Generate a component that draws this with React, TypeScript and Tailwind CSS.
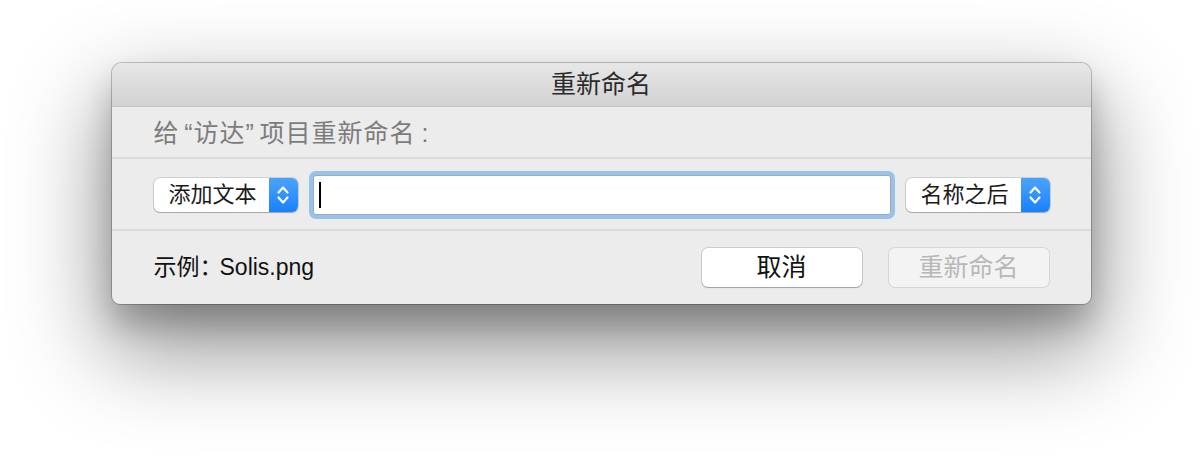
import React from "react";

const font = { fontFamily: '"Liberation Sans", "Noto Sans CJK SC", sans-serif' };

function Chevrons() {
  return (
    <svg width="14" height="22" viewBox="0 0 14 22" fill="none">
      <path d="M2.5 8.5 L7 3.5 L11.5 8.5" stroke="white" strokeWidth="2.2" strokeLinecap="round" strokeLinejoin="round" />
      <path d="M2.5 13.5 L7 18.5 L11.5 13.5" stroke="white" strokeWidth="2.2" strokeLinecap="round" strokeLinejoin="round" />
    </svg>
  );
}

function Popup({ label }: { label: string }) {
  return (
    <div className="flex h-[34px] w-[144px] items-stretch rounded-[6px] bg-white shadow-[0_0_0_1px_rgba(0,0,0,0.12),0_1px_1px_rgba(0,0,0,0.2)]">
      <div className="flex flex-1 items-center pl-[15px] text-[22px] text-[#1a1a1a]">{label}</div>
      <div className="flex w-[29px] items-center justify-center rounded-r-[6px] bg-gradient-to-b from-[#4aa3fd] to-[#1681fb]">
        <Chevrons />
      </div>
    </div>
  );
}

export default function App() {
  return (
    <div className="h-[464px] w-[1202px] bg-white pt-[63px]" style={font}>
      <div className="mx-auto flex h-[241px] w-[979px] flex-col overflow-hidden rounded-[10px] rounded-b-[8px] bg-[#ececec] shadow-[0_0_0_1px_rgba(0,0,0,0.22),0_20px_30px_rgba(0,0,0,0.2),0_40px_90px_8px_rgba(0,0,0,0.42)]">
        <div className="flex h-[44px] shrink-0 items-center justify-center border-b border-[#c4c3c4] bg-gradient-to-b from-[#e8e7e8] to-[#d3d2d3] text-[25px] text-[#2b2b2b]">
          重新命名
        </div>
        <div className="flex h-[52px] shrink-0 items-center border-b-2 border-[#d9d9d9] pl-[42px] pt-[4px] text-[25px] tracking-[1px] text-[#7c7c7c]">
          给<span className="inline-block w-[14px] text-right">“</span>访达<span className="inline-block w-[14px] text-left">”</span>项目重新命名<span className="ml-[6px]">:</span>
        </div>
        <div className="flex h-[72px] shrink-0 items-center gap-[11px] border-b-2 border-[#d9d9d9] pl-[42px] pr-[41px] pt-[1px]">
          <Popup label="添加文本" />
          <div className="flex h-[48px] flex-1 rounded-[7px] bg-[#93c3ee] p-[4px]">
            <div className="flex flex-1 items-center rounded-[3px] border border-[#a8a8a8] bg-white pl-[5px]">
              <div className="h-[26px] w-[2px] bg-black" />
            </div>
          </div>
          <Popup label="名称之后" />
        </div>
        <div className="flex flex-1 items-center pl-[42px] pr-[42px]">
          <div className="flex-1 text-[23px] text-[#111]">
            示例：<span className="ml-[-3px]">Solis.png</span>
          </div>
          <button className="flex h-[39px] w-[160px] items-center justify-center rounded-[6px] bg-white text-[25px] text-[#111] shadow-[0_0_0_1px_rgba(0,0,0,0.13),0_1px_1px_rgba(0,0,0,0.22)]">
            取消
          </button>
          <button className="ml-[27px] flex h-[39px] w-[160px] items-center justify-center rounded-[6px] bg-[#f3f3f3] text-[25px] text-[#b8b8b8] shadow-[0_0_0_1px_rgba(0,0,0,0.09)]">
            重新命名
          </button>
        </div>
      </div>
    </div>
  );
}
